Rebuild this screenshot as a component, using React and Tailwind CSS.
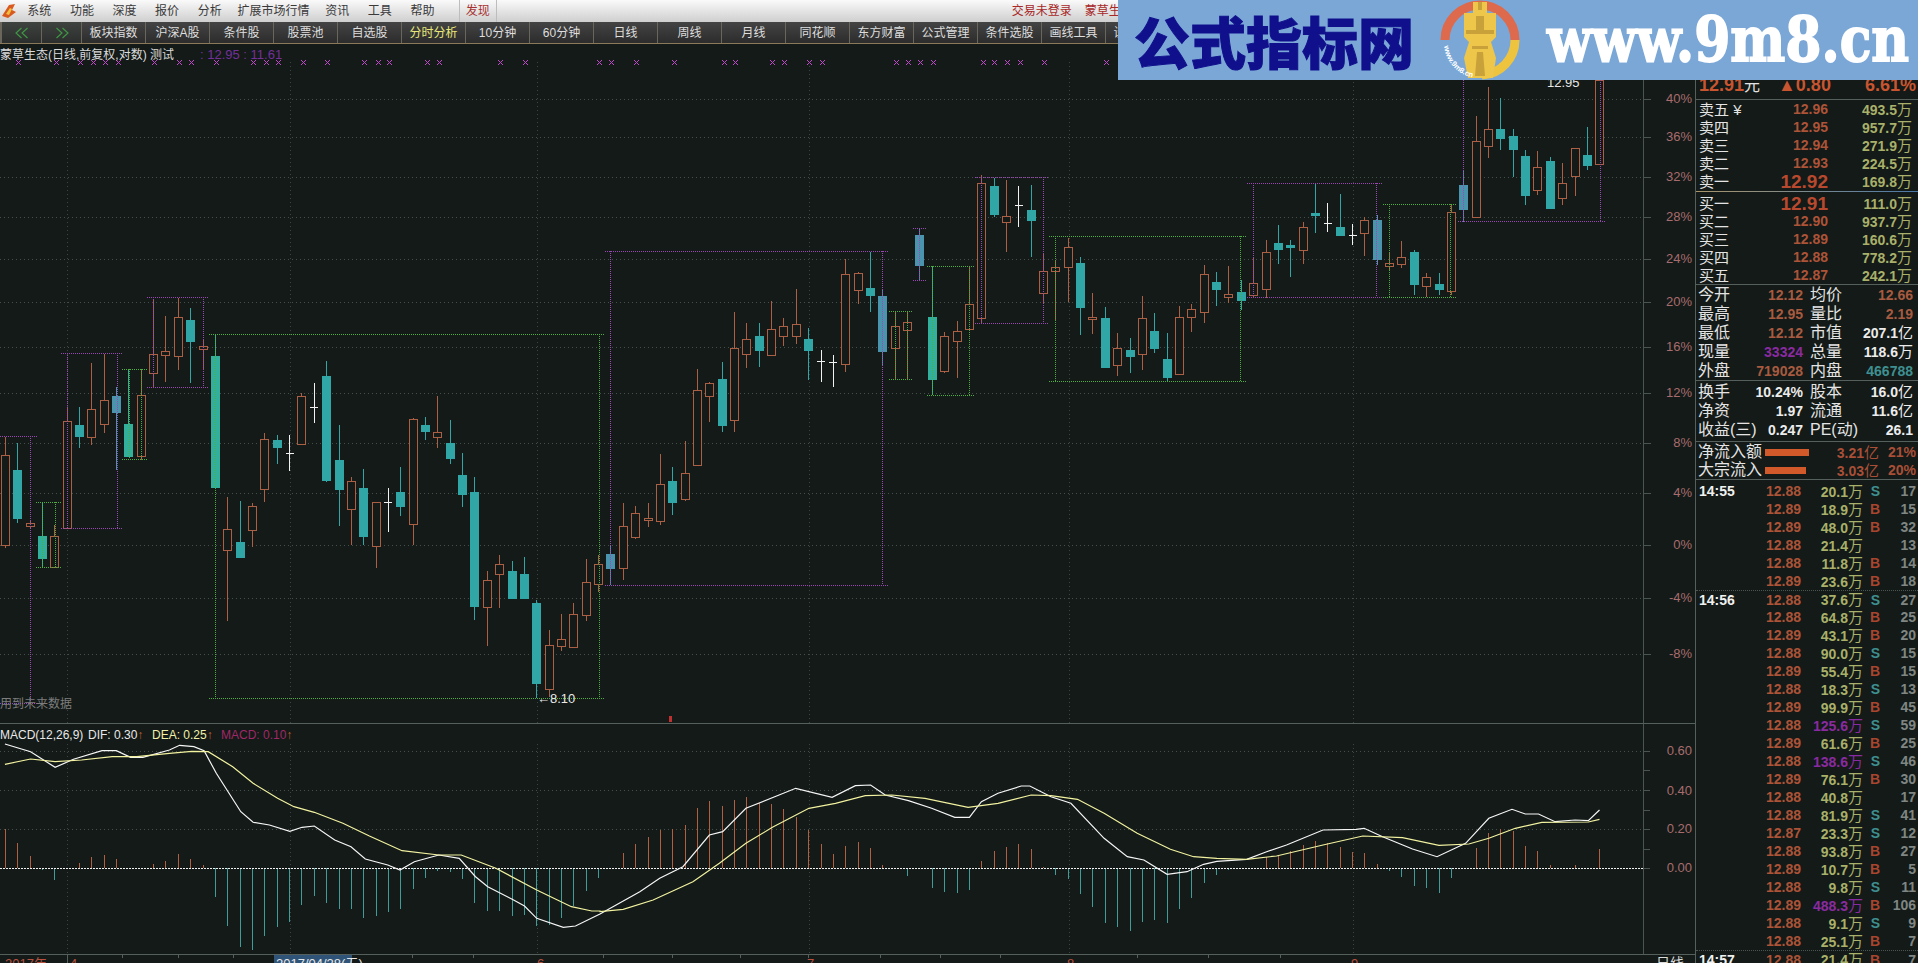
const menus = [
  ['系统', 'w-[42.6px]'], ['功能', 'w-[42.6px]'], ['深度', 'w-[42.6px]'], ['报价', 'w-[42.6px]'], ['分析', 'w-[42.6px]'],
  ['扩展市场行情', 'w-[85px]'], ['资讯', 'w-[42.6px]'], ['工具', 'w-[42.6px]'], ['帮助', 'w-[42.6px]'],
];
const tools = ['板块指数', '沪深A股', '条件股', '股票池', '自选股', '分时分析', '10分钟', '60分钟', '日线', '周线', '月线', '同花顺', '东方财富', '公式管理', '条件选股', '画线工具', '设置指标'];

const BG = '#131a17';
const xi = (i) => 5.3 + 12.36 * i;

// hi, body top, body bottom, lo, type (u hollow, d teal, b blue, g green, w white cross)
const K = [
  [437,455,545,548,'u'],[443,470,518,523,'d'],[521,523,526,528,'u'],[502,536,558,567,'g'],[525,536,567,567,'u'],
  [408,421,528,528,'u'],[407,425,436,448,'d'],[363,409,437,445,'u'],[354,400,424,433,'u'],[387,396,412,470,'b'],
  [369,424,456,457,'g'],[369,395,456,460,'u'],[300,354,373,387,'u'],[316,351,355,382,'u'],[298,317,356,370,'u'],
  [308,320,341,383,'d'],[340,346,349,370,'u'],[335,356,487,487,'g'],[497,529,550,621,'u'],[501,542,557,558,'d'],
  [503,506,530,547,'u'],[433,439,489,502,'u'],[435,440,447,464,'d'],[435,453,453,471,'w'],[393,396,444,444,'u'],
  [383,407,407,423,'w'],[361,376,480,482,'d'],[425,460,489,526,'d'],[477,481,509,545,'u'],[469,488,536,545,'d'],
  [502,502,546,568,'u'],[488,502,502,532,'w'],[467,492,506,516,'d'],[418,419,524,545,'u'],[417,425,431,440,'d'],
  [396,432,437,448,'u'],[420,443,458,464,'d'],[453,475,494,507,'d'],[477,492,606,620,'d'],[571,580,607,646,'u'],
  [555,564,574,608,'u'],[561,571,598,599,'d'],[557,574,598,599,'d'],[600,603,683,698,'d'],[630,645,689,697,'u'],
  [614,639,646,651,'u'],[603,614,647,647,'u'],[559,582,615,621,'u'],[555,564,584,592,'u'],[545,554,568,585,'b'],
  [503,526,568,580,'u'],[506,513,537,539,'u'],[503,518,520,527,'u'],[454,484,521,525,'u'],[467,481,502,515,'d'],
  [441,473,499,501,'u'],[369,390,465,465,'u'],[382,383,396,422,'u'],[362,379,425,432,'d'],[312,348,420,432,'u'],
  [323,339,354,368,'u'],[323,336,350,367,'d'],[301,329,355,355,'u'],[318,326,336,346,'u'],[289,324,336,344,'u'],
  [328,339,350,380,'d'],[350,361,361,382,'w'],[355,362,362,387,'w'],[259,274,364,372,'u'],[272,273,290,304,'u'],
  [252,288,295,312,'d'],[290,296,351,365,'b'],[311,326,348,379,'u'],[311,322,330,379,'u'],[228,235,265,280,'b'],
  [266,317,379,395,'g'],[332,336,371,373,'u'],[321,331,341,378,'u'],[266,304,329,329,'u'],[175,183,318,323,'u'],
  [178,186,214,217,'d'],[180,216,222,252,'u'],[186,205,205,227,'w'],[185,210,220,257,'d'],[253,271,293,303,'u'],
  [260,267,271,320,'u'],[238,247,267,302,'u'],[257,263,307,335,'d'],[293,317,319,334,'u'],[307,318,367,368,'d'],
  [333,348,365,376,'u'],[338,350,356,373,'d'],[296,318,354,370,'u'],[313,331,348,353,'d'],[333,359,377,382,'d'],
  [306,317,374,374,'u'],[304,309,317,332,'u'],[265,274,312,323,'u'],[272,282,289,306,'d'],[266,294,297,303,'u'],
  [280,292,300,310,'d'],[258,283,295,297,'u'],[240,252,289,298,'u'],[225,243,249,264,'d'],[240,245,247,277,'d'],
  [222,227,250,264,'u'],[183,213,215,233,'d'],[203,223,223,232,'w'],[194,227,235,236,'d'],[224,235,235,245,'w'],
  [217,220,233,256,'u'],[215,220,259,265,'b'],[252,263,266,270,'u'],[241,257,264,268,'u'],[250,252,284,295,'d'],
  [273,277,286,297,'u'],[273,284,289,295,'d'],[205,212,291,295,'u'],[170,185,209,222,'b'],[116,141,217,217,'u'],
  [87,129,146,158,'u'],[98,129,138,150,'d'],[129,136,149,177,'d'],[150,156,195,205,'d'],[151,167,190,195,'u'],
  [157,161,208,208,'d'],[163,183,198,205,'u'],[148,148,176,196,'u'],[127,155,165,170,'d'],[60,80,164,164,'u'],
];

const UP = '#ab6045';
const DOWN = { d: '#31a6a6', b: '#4b94ae', g: '#33b09c' };

const P = '#9a48b4';
const G = '#4fae40';
// x from, x to, left vertical, right vertical, top, bottom, colour
const boxes = [
  [0, 37, null, 30.6, 436, 703, P],
  [61, 122, 67, 117, 353, 528, P],
  [147, 208, 153, 203, 297, 387, P],
  [36, 61, 42, 55.5, 502, 567, G],
  [122, 148, 129, 141.6, 369, 459, G],
  [209, 605, 215.5, 599, 334, 698, G],
  [605, 889, 610, 882, 251, 585, P],
  [913, 926, 919.6, null, 228, 280, P],
  [889, 913, 895.5, 907.3, 311, 379, G],
  [926.5, 975, 932.7, 969.4, 266, 395, G],
  [975, 1049, 981.6, 1043.7, 177, 323, P],
  [1049, 1247, 1055.5, 1240.7, 236, 381, G],
  [1247, 1382, 1253.5, 1376.7, 183, 297, P],
  [1383, 1457, 1389, 1450, 204, 297, G],
  [1458, 1606, 1463, 1600, 60, 221, P],
];

const marks = [18,56,80,93,105,118,154,179,191,216,253,266,278,303,327,364,378,389,427,439,500,525,599,611,636,674,724,735,772,784,809,822,896,908,920,933,983,994,1007,1020,1044,1106];
const gridY = [99,137,177,217,259,302,347,393,443,493,545,598,654];
const pct = ['40%','36%','32%','28%','24%','20%','16%','12%','8%','4%','0%','-4%','-8%'];
const gridX = [67,290,537,809,1069,1353];

// histogram ends, as seen in the pane
const histA = [829,843,856,870,880,868,863,857,855,859,868,868,864,861,854,859,865,897,926,947,950,936,927,922,905,896,903,909,909,918,916,912,909,889,878,871,872,879,903,911,911,916,915,926,925,918,906,891,878,868];
const histB = [340,312,292,270,268,255,205,182,198,180,170,190,193,208,230,270,312,343,317,305,323,375,388,408,384,443,456,458,450,362,333,320,313,328,380,406,417,462,500,548,560,572,545,540,548,508,474,428,405,390,384,384,350,345,332,315,303,310,320,335,340,372,393,410,437,443,460,415,384,323,280,268,272,318,333,375,384,375,384,326];
const hist = [...histA, ...histB.map((y) => 740 + y / 3)];

const left = (pts) => pts.map(([x, y]) => [x / 2.45, 690 + y / 3]);
const right = (pts) => pts.map(([x, y]) => [600 + x / 1.5077, 740 + y / 3]);
const poly = (pts) => pts.map(([x, y]) => `${x.toFixed(1)},${y.toFixed(1)}`).join(' ');

const dif = [...left([[12,162],[75,185],[135,232],[180,208],[250,182],[285,182],[320,202],[350,202],[415,180],[440,166],[475,170],[500,182],[530,250],[590,365],[620,397],[660,405],[710,424],[740,412],[770,408],[820,450],[860,470],[895,507],[950,525],[980,540],[1015,515],[1075,495],[1125,505],[1165,560],[1195,590],[1255,628],[1285,648],[1315,685],[1380,712],[1410,708],[1470,672]]),
  ...right([[0,522],[60,455],[90,415],[125,380],[165,285],[185,275],[220,205],[295,145],[350,172],[385,137],[408,135],[430,165],[465,182],[500,205],[535,232],[557,232],[575,185],[600,160],[635,138],[648,138],[680,170],[710,190],[760,295],[795,350],[820,360],[855,403],[885,395],[910,373],[930,364],[975,358],[1005,335],[1035,315],[1090,270],[1140,268],[1152,265],[1180,290],[1225,327],[1262,350],[1305,310],[1340,235],[1375,208],[1395,222],[1415,222],[1440,245],[1470,240],[1490,242],[1507,210]])];
const dea = [...left([[12,223],[75,207],[135,215],[200,210],[275,200],[335,200],[415,190],[470,184],[510,185],[570,230],[620,280],[680,325],[720,350],[770,367],[840,400],[905,438],[985,482],[1075,495],[1130,495],[1215,535],[1315,600],[1400,650],[1450,663],[1470,663]]),
  ...right([[0,515],[35,508],[80,480],[140,425],[180,370],[220,310],[260,262],[315,205],[355,190],[400,167],[440,165],[490,175],[555,202],[600,190],[650,165],[680,167],[720,178],[760,220],[810,280],[860,328],[895,350],[930,355],[975,358],[1020,348],[1090,315],[1150,288],[1210,293],[1265,316],[1310,312],[1340,295],[1380,265],[1420,247],[1490,246],[1507,238]])];

const sells = [['卖五', '12.96', '493.5'], ['卖四', '12.95', '957.7'], ['卖三', '12.94', '271.9'], ['卖二', '12.93', '224.5'], ['卖一', '12.92', '169.8']];
const buys = [['买一', '12.91', '111.0'], ['买二', '12.90', '937.7'], ['买三', '12.89', '160.6'], ['买四', '12.88', '778.2'], ['买五', '12.87', '242.1']];

const ticks = [
  ['14:55','12.88','20.1','S','17'],['','12.89','18.9','B','15'],['','12.89','48.0','B','32'],['','12.88','21.4','','13'],['','12.88','11.8','B','14'],['','12.89','23.6','B','18'],
  ['14:56','12.88','37.6','S','27'],['','12.88','64.8','B','25'],['','12.89','43.1','B','20'],['','12.88','90.0','S','15'],['','12.89','55.4','B','15'],['','12.88','18.3','S','13'],['','12.89','99.9','B','45'],['','12.88','125.6','S','59'],['','12.89','61.6','B','25'],['','12.88','138.6','S','46'],['','12.89','76.1','B','30'],['','12.88','40.8','','17'],['','12.88','81.9','S','41'],['','12.87','23.3','S','12'],['','12.88','93.8','B','27'],['','12.89','10.7','B','5'],['','12.88','9.8','S','11'],['','12.89','488.3','B','106'],['','12.88','9.1','S','9'],['','12.88','25.1','B','7'],
  ['14:57','12.88','21.4','B','7'],
];

function Candles() {
  return K.map(([hi, top, bot, lo, t], i) => {
    const x = xi(i);
    if (t === 'w') {
      return (
        <g key={i} stroke="#f2f2f2">
          <line x1={x} x2={x} y1={hi} y2={lo} />
          <line x1={x - 4} x2={x + 4} y1={top + 0.5} y2={top + 0.5} />
        </g>
      );
    }
    if (t === 'u') {
      return (
        <g key={i} stroke={UP}>
          <line x1={x} x2={x} y1={hi} y2={lo} />
          <rect x={x - 4} y={top} width={8} height={bot - top} fill={BG} />
        </g>
      );
    }
    return (
      <g key={i} stroke={DOWN[t]}>
        <line x1={x} x2={x} y1={hi} y2={lo} />
        <rect x={x - 4} y={top} width={8} height={bot - top} fill={DOWN[t]} />
      </g>
    );
  });
}

function MainChart() {
  return (
    <svg className="block w-[1695px] h-[680px]" viewBox="0 44 1695 680" shapeRendering="crispEdges">
      {gridY.map((y) => <line key={y} x1={0} x2={1643} y1={y} y2={y} stroke="#454e4a" strokeDasharray="1 3" />)}
      {gridX.map((x) => <line key={x} x1={x} x2={x} y1={62} y2={724} stroke="#3c4541" strokeDasharray="1 3" />)}
      <Candles />
      {boxes.map(([a, b, l, r, top, bot, c], i) => (
        <g key={i} stroke={c} strokeDasharray="1 1" fill="none">
          <line x1={a} x2={b} y1={top} y2={top} />
          <line x1={a} x2={b} y1={bot} y2={bot} />
          {l !== null && <line x1={l} x2={l} y1={top} y2={bot} />}
          {r !== null && <line x1={r} x2={r} y1={top} y2={bot} />}
        </g>
      ))}
      {marks.map((x) => (
        <g key={x} stroke="#c248cc">
          <line x1={x - 2} x2={x + 3} y1={60} y2={65} />
          <line x1={x - 2} x2={x + 3} y1={65} y2={60} />
        </g>
      ))}
      <line x1={1643.5} x2={1643.5} y1={44} y2={724} stroke="#4a5551" />
      {gridY.map((y, i) => (
        <g key={y}>
          <line x1={1643} x2={1651} y1={y} y2={y} stroke="#4a5551" />
          <text x={1692} y={y + 4} textAnchor="end" fontSize="13" fill="#a96c6e">{pct[i]}</text>
        </g>
      ))}
      <line x1={0} x2={1695} y1={723.5} y2={723.5} stroke="#55605c" />
      <rect x={669} y={716} width={3} height={6} fill="#c03030" />
      <text x={537} y={703} fontSize="13" fill="#e8e8e8">←8.10</text>
      <text x={1547} y={87} fontSize="13" fill="#e8e8e8">12.95</text>
    </svg>
  );
}

function MacdChart() {
  return (
    <svg className="block w-[1695px] h-[239px]" viewBox="0 724 1695 239">
      <g shapeRendering="crispEdges">
        {[751, 790, 829].map((y) => <line key={y} x1={0} x2={1643} y1={y} y2={y} stroke="#454e4a" strokeDasharray="1 3" />)}
        {gridX.map((x) => <line key={x} x1={x} x2={x} y1={744} y2={955} stroke="#3c4541" strokeDasharray="1 3" />)}
        {hist.map((y, i) => {
          if (Math.abs(y - 868) < 1) return null;
          return <line key={i} x1={xi(i)} x2={xi(i)} y1={868} y2={y} stroke={y < 868 ? '#b06040' : '#3f9c98'} />;
        })}
        <line x1={0} x2={1643} y1={868} y2={868} stroke="#f0f0f0" strokeDasharray="2 1" />
        <line x1={1643.5} x2={1643.5} y1={724} y2={955} stroke="#4a5551" />
        {[751, 770, 790, 810, 829, 849, 868].map((y) => <line key={y} x1={1643} x2={1650} y1={y} y2={y} stroke="#4a5551" />)}
        <line x1={0} x2={1695} y1={954.5} y2={954.5} stroke="#55605c" />
        {[122, 178, 233, 412, 473, 603, 672, 740, 808, 880, 940, 1000, 1137, 1208, 1280].map((x) => <line key={x} x1={x} x2={x} y1={955} y2={958} stroke="#55605c" />)}
        <line x1={67} x2={67} y1={955} y2={963} stroke="#55605c" />
        <rect x={274} y={955} width={78} height={8} fill="#2f5478" />
      </g>
      <polyline points={poly(dif)} fill="none" stroke="#f6f6f6" strokeWidth="1.2" />
      <polyline points={poly(dea)} fill="none" stroke="#f2f2a0" strokeWidth="1.2" />
      {[['0.60', 751], ['0.40', 791], ['0.20', 829], ['0.00', 868]].map(([t, y]) => (
        <text key={t} x={1692} y={y + 4} textAnchor="end" fontSize="13" fill="#a96c6e">{t}</text>
      ))}
      <text x={5} y={968} fontSize="13" fill="#b85040">2017年</text>
      <text x={70} y={968} fontSize="13" fill="#b85040">4</text>
      <text x={276} y={968} fontSize="13" fill="#e8e8e8">2017/04/28(五)</text>
      <text x={537} y={968} fontSize="13" fill="#b85040">6</text>
      <text x={807} y={968} fontSize="13" fill="#b85040">7</text>
      <text x={1067} y={968} fontSize="13" fill="#b85040">8</text>
      <text x={1351} y={968} fontSize="13" fill="#b85040">9</text>
      <text x={1656} y={968} fontSize="14" fill="#dcdcdc">日线</text>
    </svg>
  );
}

function Logo() {
  return (
    <svg className="w-[80px] h-[80px] shrink-0" viewBox="0 0 80 80">
      <path d="M5 40 A35 35 0 0 1 75 40" fill="none" stroke="#de6a4d" strokeWidth="9" />
      <path d="M75 40 A35 35 0 0 1 42 75" fill="none" stroke="#eec43f" strokeWidth="9" />
      <path d="M33 2 H47 V13 H56 V37 L51 42 L56 58 L53 78 H28 L24 58 L29 42 L24 37 V13 H33 Z" fill="#eec64a" />
      <path d="M38 2 H42 V10 H38 Z M26 30 H54 V34 H26 Z M36 16 H44 V30 H36 Z M32 46 H48 V49 H32 Z M37 52 H43 L45 76 H35 Z" fill="#c9a13a" />
      <path id="logoRing" d="M4 46 A36 36 0 0 0 36 78" fill="none" />
      <text fontSize="7.5" fill="#ffffff" fontWeight="700">
        <textPath href="#logoRing">www.9m8.cn</textPath>
      </text>
    </svg>
  );
}

function Chevrons({ flip }) {
  return (
    <svg className={`w-[14px] h-[12px] ${flip ? 'rotate-180' : ''}`} viewBox="0 0 14 12" fill="none" stroke="#3f9a45" strokeWidth="1.1">
      <path d="M6.5 1 L1 6 L6.5 11" />
      <path d="M12.5 1 L7 6 L12.5 11" />
    </svg>
  );
}

function Row({ label, price, vol, big }) {
  return (
    <div className="flex h-[18px] items-center pl-[3px] pr-[6px]">
      <span className="w-[40px] text-[15px] text-[#e4e4e4] leading-none whitespace-nowrap">{label}</span>
      <span className={`w-[89px] text-right font-bold leading-none text-[#ad5338] ${big ? 'text-[19px] text-[#b9492e]' : 'text-[14px]'}`}>{price}</span>
      <span className="flex-1 text-right text-[14px] font-bold leading-none text-[#a9b06a]">{vol}<span className="text-[15px] font-normal">万</span></span>
    </div>
  );
}

function Stat({ a, av, ac, b, bv, bc }) {
  return (
    <div className="flex h-[19px] items-center pl-[2px] pr-[5px]">
      <span className="w-[48px] text-[16px] text-[#e4e4e4] leading-none whitespace-nowrap">{a}</span>
      <span className={`w-[57px] text-right text-[14px] font-bold leading-none ${ac}`}>{av}</span>
      <span className="ml-[7px] w-[40px] text-[16px] text-[#e4e4e4] leading-none whitespace-nowrap">{b}</span>
      <span className={`flex-1 text-right text-[14px] font-bold leading-none ${bc}`}>{bv}</span>
    </div>
  );
}

function Flow({ label, width, val, pctText }) {
  return (
    <div className="flex h-[18px] items-center pl-[2px] pr-[2px]">
      <span className="w-[67px] text-[16px] text-[#e4e4e4] leading-none whitespace-nowrap">{label}</span>
      <span className={`h-[7px] bg-[#d2592a] ${width}`}></span>
      <span className="ml-auto w-[60px] text-right text-[14px] font-bold leading-none text-[#a94f38]">{val}<span className="text-[15px] font-normal">亿</span></span>
      <span className="w-[37px] text-right text-[14px] font-bold leading-none text-[#a94f38]">{pctText}</span>
    </div>
  );
}

function SidePanel() {
  const red = 'text-[#a85a40]';
  const white = 'text-[#ececec]';
  return (
    <div className="w-[223px] h-[919px] overflow-hidden border-l border-[#55605c]">
      <div className="h-[56px] flex items-end pb-[5px] pl-[3px] pr-[2px] border-b border-[#55605c] text-[18px] font-bold leading-none text-[#c8552f]">
        <span>12.91</span><span className="w-[34px] font-normal text-[16px] text-[#e4e4e4]">元</span>
        <span className="w-[54px]">▲0.80</span>
        <span className="ml-auto">6.61%</span>
      </div>
      {sells.map(([l, p, v], i) => <Row key={l} label={i === 0 ? '卖五 ¥' : l} price={p} vol={v} big={i === 4} />)}
      <div className="mt-[1px] h-px bg-gradient-to-r from-[#a89468] to-[#4a78a8]"></div>
      <div className="pt-[2px]">
        {buys.map(([l, p, v], i) => <Row key={l} label={l} price={p} vol={v} big={i === 0} />)}
      </div>
      <div className="border-t border-[#55605c]">
        <Stat a="今开" av="12.12" ac={red} b="均价" bv="12.66" bc={red} />
        <Stat a="最高" av="12.95" ac={red} b="量比" bv="2.19" bc={red} />
        <Stat a="最低" av="12.12" ac={red} b="市值" bv={<>207.1<span className="text-[15px] font-normal">亿</span></>} bc={white} />
        <Stat a="现量" av="33324" ac="text-[#8a2aa0]" b="总量" bv={<>118.6<span className="text-[15px] font-normal">万</span></>} bc={white} />
        <Stat a="外盘" av="719028" ac={red} b="内盘" bv="466788" bc="text-[#3f8f90]" />
      </div>
      <div className="border-t border-[#55605c] pt-px pb-[2px]">
        <Stat a="换手" av="10.24%" ac={white} b="股本" bv={<>16.0<span className="text-[15px] font-normal">亿</span></>} bc={white} />
        <Stat a="净资" av="1.97" ac={white} b="流通" bv={<>11.6<span className="text-[15px] font-normal">亿</span></>} bc={white} />
        <Stat a="收益(三)" av="0.247" ac={white} b="PE(动)" bv="26.1" bc={white} />
      </div>
      <div className="border-t border-[#55605c] pt-px">
        <Flow label="净流入额" width="w-[44px]" val="3.21" pctText="21%" />
        <Flow label="大宗流入" width="w-[41px]" val="3.03" pctText="20%" />
      </div>
      <div className="border-t border-[#55605c] pt-[2px]">
        {ticks.map(([time, price, vol, side, count], i) => (
          <div key={i} className={`flex h-[18px] items-center pr-[2px] ${time && i > 0 ? 'border-t border-dotted border-[#4a5551]' : ''}`}>
            <span className="w-[45px] pl-[3px] text-[14px] font-bold leading-none text-[#f0f0f0]">{time}</span>
            <span className="w-[60px] text-right text-[14px] font-bold leading-none text-[#ad5338]">{price}</span>
            <span className={`w-[62px] text-right text-[14px] font-bold leading-none ${vol.length > 4 && parseFloat(vol) > 100 ? 'text-[#8a2aa0]' : 'text-[#a9b06a]'}`}>{vol}<span className="text-[15px] font-normal">万</span></span>
            <span className={`w-[17px] text-right text-[14px] font-bold leading-none ${side === 'S' ? 'text-[#3f8f90]' : 'text-[#a8452f]'}`}>{side}</span>
            <span className="flex-1 text-right text-[14px] font-bold leading-none text-[#7f8683]">{count}</span>
          </div>
        ))}
      </div>
    </div>
  );
}

export default function App() {
  return (
    <div className="relative w-[1918px] h-[963px] overflow-hidden bg-[#131a17] [font-family:'Liberation_Sans','Noto_Sans_CJK_SC',sans-serif]">
      {/* menu */}
      <div className="h-[22px] flex items-center bg-gradient-to-b from-[#fafafa] to-[#cfcfcf] text-[12px] text-[#3a3a3a] whitespace-nowrap">
        <svg className="w-[18px] h-[18px] shrink-0" viewBox="0 0 18 18">
          <path d="M2 14 L9 3 L15 2 L12 8 L16 10 L8 16 Z" fill="#d85a20" />
          <path d="M6 12 L10 6 L12 7 L9 13 Z" fill="#f2c040" />
        </svg>
        {menus.map(([t, w]) => <span key={t} className={`${w} text-center`}>{t}</span>)}
        <span className="ml-[15px] h-[22px] w-[38px] flex items-center justify-center border-x border-[#bdbdbd] text-[#a83232]">发现</span>
        <span className="ml-[515px] text-[#a82828]">交易未登录</span>
        <span className="ml-[13px] text-[#a82828]">蒙草生态</span>
      </div>
      {/* toolbar */}
      <div className="h-[22px] flex items-stretch pl-[2px] bg-[#6a665c] border-b border-[#8a7a5a] text-[12px] text-[#dedede] whitespace-nowrap">
        <button className="w-[40px] flex items-center justify-center border-r border-[#6a665c] bg-gradient-to-b from-[#3f4340] to-[#2b2e2c]"><Chevrons /></button>
        <button className="w-[40px] flex items-center justify-center border-r border-[#6a665c] bg-gradient-to-b from-[#3f4340] to-[#2b2e2c]"><Chevrons flip /></button>
        {tools.map((t) => (
          <button key={t} className={`w-[64px] shrink-0 border-r border-[#6a665c] bg-gradient-to-b from-[#444] to-[#2c2c2c] ${t === '分时分析' ? 'text-[#e8e878]' : ''}`}>{t}</button>
        ))}
      </div>
      {/* chart + side panel */}
      <div className="flex">
        <div className="w-[1695px] shrink-0">
          <div className="relative h-[680px]">
            <MainChart />
            <div className="absolute left-0 top-[1px] flex items-center text-[12px] text-[#dcdcdc] whitespace-nowrap">
              <span className="w-[200px]">蒙草生态(日线,前复权,对数) 测试</span>
              <span className="text-[13px] text-[#74309a]">: 12.95 : 11.61</span>
            </div>
            <div className="absolute left-0 top-[651px] text-[12px] text-[#7d7d7d]">用到未来数据</div>
          </div>
          <div className="relative h-[239px]">
            <MacdChart />
            <div className="absolute left-0 top-[2px] flex text-[12px] whitespace-nowrap">
              <span className="w-[88px] text-[#e8e8e8]">MACD(12,26,9)</span>
              <span className="w-[64px] text-[#e8e8e8]">DIF: 0.30<span className="text-[#c06030]">↑</span></span>
              <span className="w-[69px] text-[#f0f0a8]">DEA: 0.25<span className="text-[#c06030]">↑</span></span>
              <span className="text-[#a02868]">MACD: 0.10<span className="text-[#c06030]">↑</span></span>
            </div>
          </div>
        </div>
        <SidePanel />
      </div>
      {/* site banner over the top right */}
      <div className="absolute left-[1118px] top-0 w-[800px] h-[80px] flex items-center bg-[#7ba7d7] whitespace-nowrap">
        <span className="ml-[16px] w-[306px] text-[56px] leading-none font-black text-[#10108c] [-webkit-text-stroke:1px_#10108c] [font-family:'Noto_Sans_CJK_SC',sans-serif]">公式指标网</span>
        <Logo />
        <span className="ml-[27px] text-[52px] leading-none font-bold text-white scale-y-[1.18] [-webkit-text-stroke:1.5px_#ffffff] [font-family:'DejaVu_Serif',serif]">www.9m8.cn</span>
      </div>
    </div>
  );
}
